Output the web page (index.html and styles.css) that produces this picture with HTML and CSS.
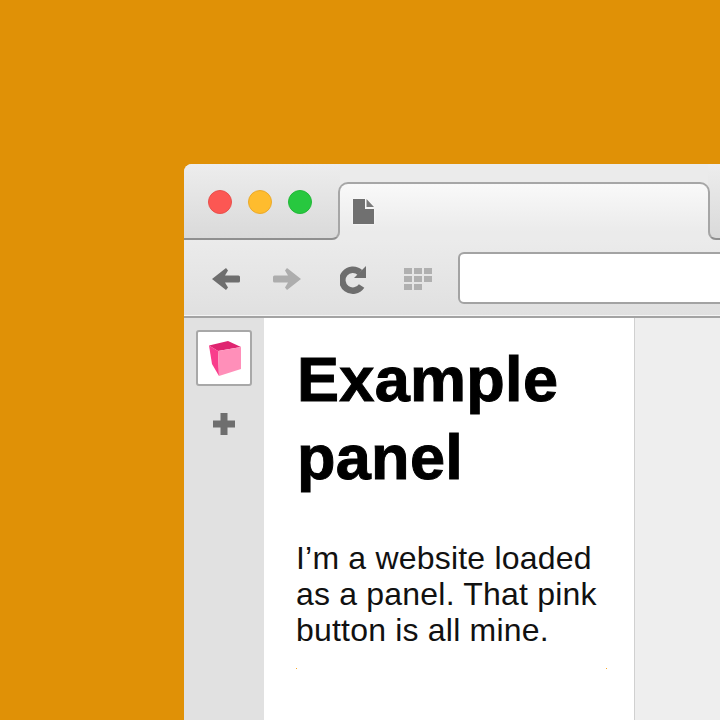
FILE: index.html
```html
<!DOCTYPE html>
<html lang="en">
<head>
    <meta charset="UTF-8">
    <title>Example panel</title>
    <link rel="stylesheet" href="styles.css">
</head>
<body>
    <div class="window">
        <div class="tabstrip">
            <div class="strip-left">
                <span class="light red"></span>
                <span class="light yellow"></span>
                <span class="light green"></span>
            </div>
            <div class="tab">
                <svg class="doc-icon" width="21" height="25" viewBox="0 0 21 25">
                    <path d="M0 0H12V10H21V25H0Z" fill="#707070"/>
                    <path d="M13.5 0L21 8H13.5Z" fill="#7a7a7a"/>
                </svg>
            </div>
            <div class="strip-right"></div>
        </div>

        <div class="toolbar">
            <svg class="tool-icon" width="28" height="22" viewBox="0 0 28 22">
                <path d="M0 11L14 0L16 2.5L13 7.5H26.5Q28 7.5 28 9V13Q28 14.5 26.5 14.5H13L16 19.5L14 22Z" fill="#6e6e6e"/>
            </svg>
            <svg class="tool-icon" width="28" height="22" viewBox="0 0 28 22">
                <path transform="matrix(-1 0 0 1 28 0)" d="M0 11L14 0L16 2.5L13 7.5H26.5Q28 7.5 28 9V13Q28 14.5 26.5 14.5H13L16 19.5L14 22Z" fill="#adadad"/>
            </svg>
            <svg class="tool-icon reload" width="28" height="29" viewBox="0 0 28 29">
                <path d="M21.6 21A10.5 10.5 0 1 1 20 7.5" fill="none" stroke="#6e6e6e" stroke-width="6.5"/>
                <path d="M26 1V13H14Z" fill="#6e6e6e"/>
            </svg>
            <svg class="tool-icon apps" width="28" height="22" viewBox="0 0 28 22" fill="#b0b0b0">
                <rect x="0" y="0" width="8" height="6"/>
                <rect x="10" y="0" width="8" height="6"/>
                <rect x="20" y="0" width="8" height="6"/>
                <rect x="0" y="8" width="8" height="6"/>
                <rect x="10" y="8" width="8" height="6"/>
                <rect x="20" y="8" width="8" height="6"/>
                <rect x="0" y="16" width="8" height="6"/>
                <rect x="10" y="16" width="8" height="6"/>
            </svg>
            <div class="address"></div>
        </div>

        <div class="main">
            <div class="sidebar">
                <button class="panel-btn">
                    <svg class="cube" width="32" height="35" viewBox="0 0 32 35">
                        <path d="M0 4.5L19 0L32 6L9 10Z" fill="#df2470"/>
                        <path d="M0 4.5L9 10L10 35L3 23Z" fill="#f93d8c"/>
                        <path d="M9 10L32 6V28L10 35Z" fill="#ff8fb9"/>
                    </svg>
                </button>
                <svg class="plus" width="22" height="22" viewBox="0 0 22 22">
                    <path d="M7.5 0H14.5V7.5H22V14.5H14.5V22H7.5V14.5H0V7.5H7.5Z" fill="#6e6e6e"/>
                </svg>
            </div>
            <div class="panel">
                <h1>Example panel</h1>
                <p>I’m a website loaded as a panel. That pink button is all mine.</p>
                <div class="dots"><span></span><span></span></div>
            </div>
            <div class="page"></div>
        </div>
    </div>
</body>
</html>
```

FILE: styles.css
```css
html, body {
    margin: 0;
    height: 720px;
    overflow: hidden;
}
body {
    background: #e09106;
    font-family: "Liberation Sans", Arial, sans-serif;
    padding: 164px 0 0 184px;
    box-sizing: border-box;
}
.window {
    width: 536px;
    height: 556px;
    display: flex;
    flex-direction: column;
    border-radius: 8px 0 0 0;
    overflow: hidden;
}

/* tab strip */
.tabstrip {
    display: flex;
    height: 76px;
    flex: none;
    background: #ebebeb;
}
.strip-left, .strip-right {
    position: relative;
    background: linear-gradient(#ededed, #d9d9d9);
}
.strip-left {
    width: 156px;
    flex: none;
    display: flex;
    gap: 16px;
    padding: 26px 0 0 24px;
    box-sizing: border-box;
    border-radius: 0 0 8px 0;
}
.strip-left::after, .strip-right::after {
    content: "";
    position: absolute;
    left: 0;
    right: 0;
    bottom: 0;
    height: 16px;
    border-bottom: 2px solid #8f8f8f;
}
.strip-left::after {
    border-right: 2px solid #a6a6a6;
    border-radius: 0 0 8px 0;
}
.strip-right {
    flex: 1;
    border-radius: 0 0 0 8px;
}
.strip-right::after {
    border-left: 2px solid #a6a6a6;
    border-radius: 0 0 0 8px;
}
.light {
    width: 24px;
    height: 24px;
    border-radius: 50%;
    box-sizing: border-box;
    border: 1px solid;
}
.red { background: #fc5753; border-color: #e8504c; }
.yellow { background: #febc2e; border-color: #eaa92a; }
.green { background: #27c83f; border-color: #22b838; }
.tab {
    position: relative;
    z-index: 1;
    width: 372px;
    height: 50px;
    flex: none;
    margin: 18px -2px 0 -2px;
    box-sizing: border-box;
    background: linear-gradient(#f9f9f9, #ebebeb);
    border: 2px solid #a6a6a6;
    border-bottom: none;
    border-radius: 10px 10px 0 0;
    padding: 15px 0 0 13px;
}
.doc-icon {
    display: block;
    filter: drop-shadow(0 0 1px white);
}

/* toolbar */
.toolbar {
    display: flex;
    align-items: center;
    height: 78px;
    flex: none;
    box-sizing: border-box;
    padding-left: 28px;
    background: linear-gradient(#ebebeb, #e0e0e0);
    border-bottom: 2px solid #a3a3a3;
    box-shadow: inset 0 -1px 0 #f4f4f4;
}
.tool-icon {
    flex: none;
    margin: 2px 33px 0 0;
}
.reload {
    margin: 2px 36px 0 6px;
}
.apps {
    margin-right: 26px;
}
.address {
    flex: none;
    width: 400px;
    height: 52px;
    box-sizing: border-box;
    background: white;
    border: 2px solid #a3a3a3;
    border-radius: 6px;
}

/* content */
.main {
    flex: 1;
    display: flex;
    min-height: 0;
}
.sidebar {
    width: 80px;
    flex: none;
    background: #e1e1e1;
    display: flex;
    flex-direction: column;
    align-items: center;
    padding: 12px 0 0 0;
    box-sizing: border-box;
}
.panel-btn {
    width: 56px;
    height: 56px;
    padding: 0;
    box-sizing: border-box;
    background: white;
    border: 2px solid #a8a8a8;
    border-radius: 3px;
    display: flex;
    align-items: center;
    justify-content: center;
}
.cube {
    margin-left: 2px;
}
.plus {
    margin-top: 27px;
}
.panel {
    width: 370px;
    flex: none;
    background: white;
    box-sizing: border-box;
    padding: 22px 0 0 32px;
}
h1 {
    margin: 0 0 44px 0;
    padding-left: 1px;
    font-size: 63px;
    line-height: 78px;
    font-weight: bold;
    letter-spacing: .3px;
    color: #000;
    width: 300px;
    -webkit-text-stroke: 1px #000;
}
p {
    margin: 0;
    width: 320px;
    font-size: 32px;
    line-height: 36px;
    letter-spacing: .2px;
    color: #111;
}
.dots {
    display: flex;
    justify-content: space-between;
    width: 311px;
    margin-top: 20px;
}
.dots span {
    width: 1px;
    height: 1px;
    background: #f9a825;
}
.page {
    flex: 1;
    background: #eeeeee;
    border-left: 1px solid #d0d0d0;
}
```
